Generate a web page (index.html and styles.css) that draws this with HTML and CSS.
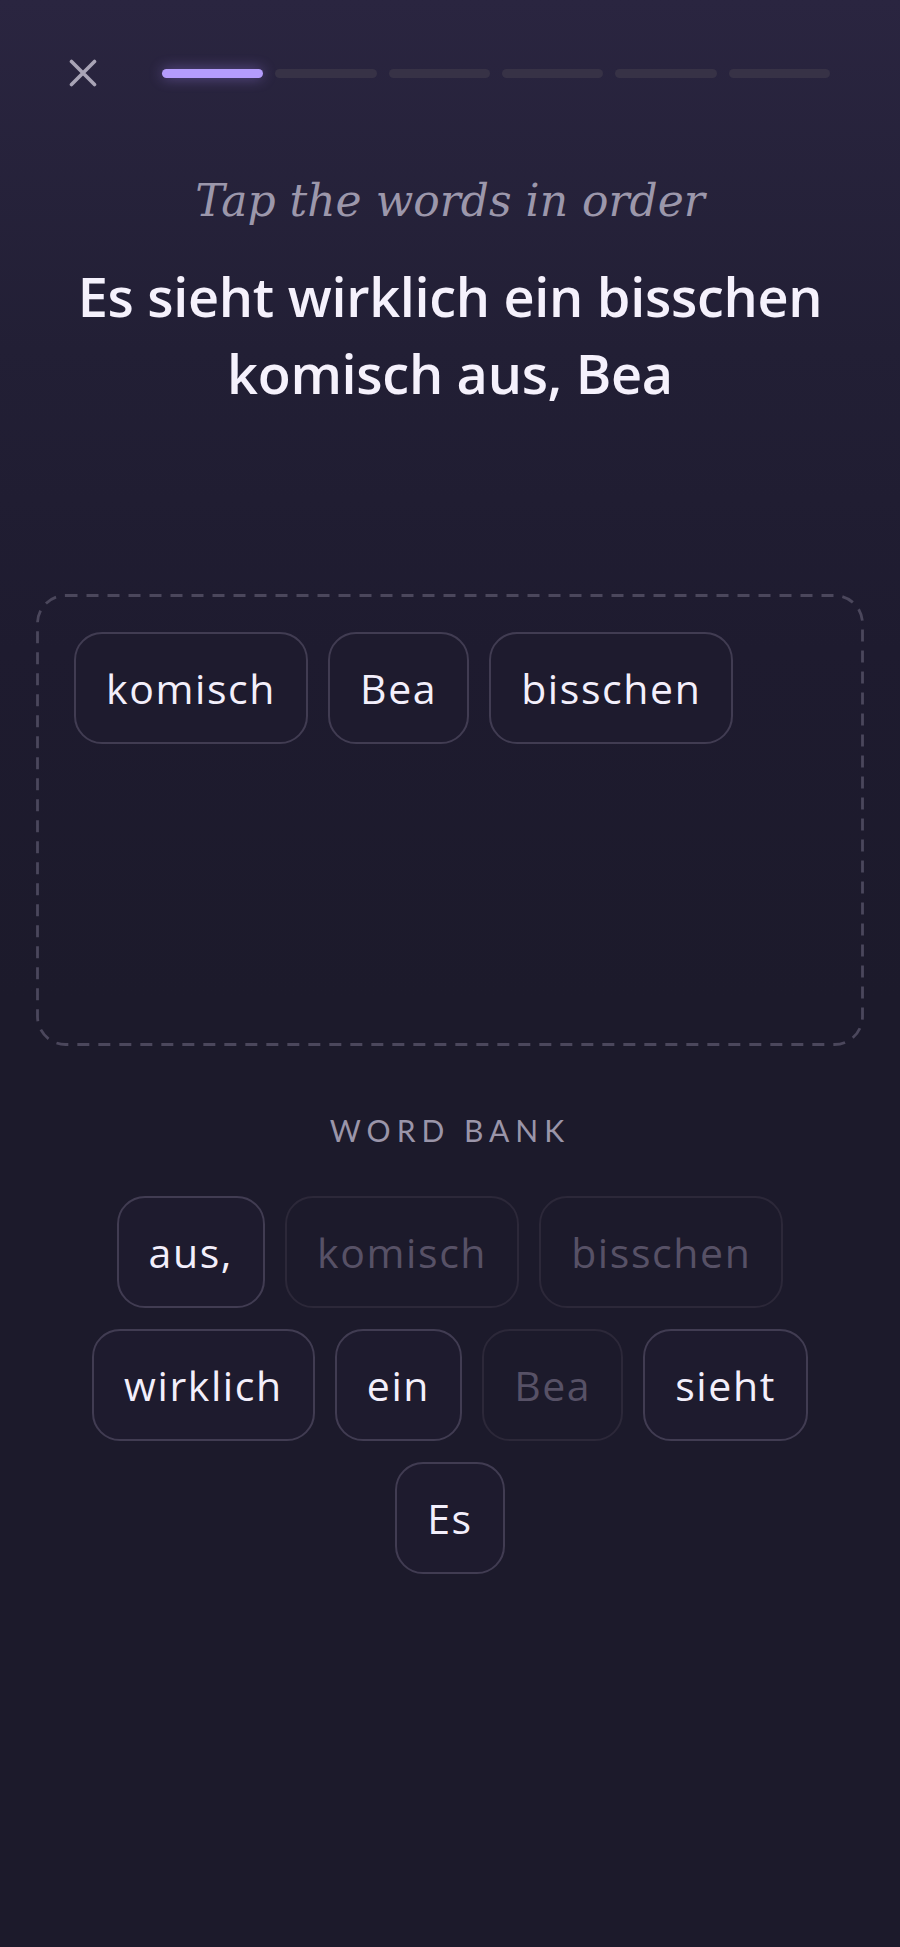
FILE: index.html
```html
<!DOCTYPE html>
<html lang="de">
<head>
<meta charset="utf-8">
<title>Tap the words in order</title>
<link rel="stylesheet" href="styles.css">
</head>
<body>
<div class="screen">
  <header class="topbar">
    <button class="close" aria-label="Close">
      <svg width="28" height="28" viewBox="0 0 28 28"><path d="M2.5 2.5 L25.5 25.5 M25.5 2.5 L2.5 25.5" stroke="#a9a4b6" stroke-width="3.6" stroke-linecap="round" fill="none"/></svg>
    </button>
    <div class="progress">
      <span class="seg active"></span>
      <span class="seg"></span>
      <span class="seg"></span>
      <span class="seg"></span>
      <span class="seg"></span>
      <span class="seg"></span>
    </div>
  </header>

  <p class="instruction">Tap the words in order</p>
  <h1 class="sentence">Es sieht wirklich ein bisschen<br>komisch aus, Bea</h1>

  <div class="answer">
    <svg class="answer-outline" width="828" height="452" aria-hidden="true"><rect x="1.5" y="1.5" width="825" height="449" rx="28" ry="28" fill="none" stroke="#4b475c" stroke-width="2.8" stroke-dasharray="12 9"/></svg>
    <span class="chip">komisch</span>
    <span class="chip">Bea</span>
    <span class="chip">bisschen</span>
  </div>

  <div class="bank-label">WORD BANK</div>
  <div class="bank">
    <span class="chip">aus,</span>
    <span class="chip used">komisch</span>
    <span class="chip used">bisschen</span>
    <span class="chip">wirklich</span>
    <span class="chip">ein</span>
    <span class="chip used">Bea</span>
    <span class="chip">sieht</span>
    <span class="chip">Es</span>
  </div>
</div>
</body>
</html>
```

FILE: styles.css
```css
html, body {
  margin: 0;
  padding: 0;
}
body {
  background: #1c1a2b;
}
.screen {
  min-height: 1947px;
  background: linear-gradient(180deg, #2a2540 0px, #221f35 350px, #1e1b2f 650px, #1c1a2b 1000px, #1c1a2b 100%);
  font-family: "Open Sans", "Noto Sans", sans-serif;
  color: #f4f0fb;
  display: flex;
  flex-direction: column;
  align-items: center;
}
.topbar {
  align-self: stretch;
  display: flex;
  align-items: center;
  padding: 59px 70px 0 69px;
  height: 28px;
  gap: 65px;
}
.close {
  width: 28px;
  height: 28px;
  padding: 0;
  border: 0;
  background: none;
  display: block;
}
.close svg { display: block; }
.progress {
  flex: 1;
  display: flex;
  gap: 12px;
}
.seg {
  flex: 1;
  height: 9px;
  border-radius: 5px;
  background: #373246;
}
.seg.active {
  background: #b49cfc;
  box-shadow: 0 0 14px rgba(170, 140, 255, 0.45);
}
.instruction {
  margin: 86px 0 0;
  font-family: "DejaVu Serif", "Liberation Serif", serif;
  font-style: italic;
  font-size: 44px;
  line-height: 56px;
  color: #9c97ab;
  letter-spacing: 0;
}
.sentence {
  margin: 29px 0 0;
  text-align: center;
  font-weight: 600;
  font-size: 54px;
  line-height: 77px;
  letter-spacing: -0.3px;
  color: #f5f1fc;
}
.answer {
  position: relative;
  box-sizing: border-box;
  margin-top: 182px;
  width: 828px;
  height: 452px;
  border-radius: 28px;
  padding: 38px;
  display: flex;
  flex-wrap: wrap;
  align-content: flex-start;
  gap: 20px;
}
.answer-outline {
  position: absolute;
  left: 0;
  top: 0;
  pointer-events: none;
}
.chip {
  box-sizing: border-box;
  height: 112px;
  padding: 0 30px;
  border: 2px solid #413c52;
  border-radius: 28px;
  display: inline-flex;
  align-items: center;
  font-size: 41px;
  font-weight: 500;
  letter-spacing: 1.6px;
  color: #f3effb;
  background: #1e1b2e;
}
.chip.used {
  border-color: #2c2839;
  color: #575166;
  background: transparent;
}
.bank-label {
  margin-top: 66px;
  font-family: "Lato", "Open Sans", sans-serif;
  font-size: 30px;
  line-height: 36px;
  letter-spacing: 6px;
  color: #9a95a9;
}
.bank {
  margin-top: 48px;
  width: 780px;
  display: flex;
  flex-wrap: wrap;
  justify-content: center;
  gap: 21px 20px;
}
```
